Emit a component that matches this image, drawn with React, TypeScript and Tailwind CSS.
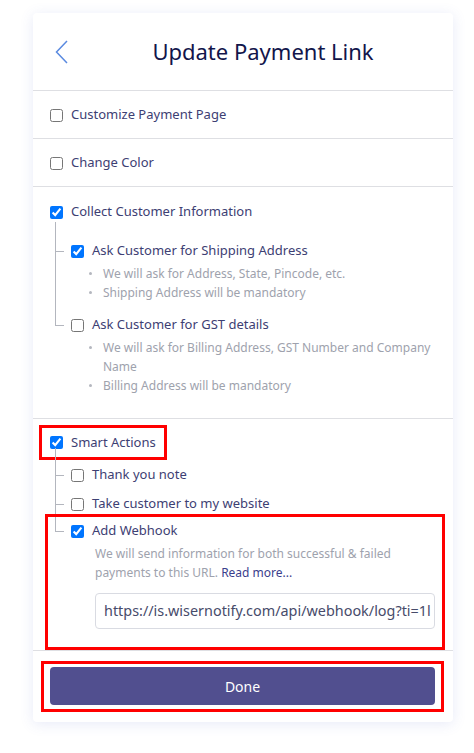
import React from 'react'

const FONT = { fontFamily: '"Noto Sans", "Open Sans", sans-serif' }

function Box({ checked }: { checked?: boolean }) {
  return (
    <input
      type="checkbox"
      defaultChecked={checked}
      className="m-0 h-[13px] w-[13px] shrink-0 accent-[#0075ff]"
    />
  )
}

function Bullets({ items }: { items: string[] }) {
  return (
    <ul className="mt-[3px] text-[12px] leading-[19px] text-[#9ea2ad]">
      {items.map((t, i) => (
        <li key={i} className="flex">
          <span className="ml-[18px] mt-[8px] h-[3px] w-[3px] shrink-0 rounded-full bg-[#b4b7bf]" />
          <span className="ml-[11px]">{t}</span>
        </li>
      ))}
    </ul>
  )
}

// branch height = top padding + half the 20px row
function SubItem({
  label,
  checked,
  last,
  pt,
  branch,
  children,
}: {
  label: string
  checked?: boolean
  last?: boolean
  pt: string
  branch: string
  children?: React.ReactNode
}) {
  return (
    <div className={`relative pl-[21px] ${pt}`}>
      {!last && <span className="absolute bottom-0 left-[5px] top-0 border-l border-[#b3b6be]" />}
      <span className={`absolute left-[5px] top-0 w-[9px] border-b border-l border-[#b3b6be] ${branch}`} />
      <label className="flex h-[20px] items-center gap-[8px] text-[13px] text-[#3d4073]">
        <Box checked={checked} />
        <span>{label}</span>
      </label>
      {children}
    </div>
  )
}

export default function App() {
  return (
    <div className="min-h-[753px] bg-white pt-[13px]" style={FONT}>
      <div className="ml-[33px] w-[420px] rounded-[4px] bg-white shadow-[0_2px_14px_rgba(70,90,200,0.13)]">
        {/* Header */}
        <div className="flex h-[78px] items-center border-b border-[#dedfe3] pl-[22px]">
          <svg width="13" height="24" viewBox="0 0 13 24" fill="none" className="shrink-0">
            <polyline points="12,1 1.5,12 12,23" stroke="#5a8ae0" strokeWidth="1.5" fill="none" />
          </svg>
          <div className="flex-1 pl-[5px] text-center text-[22px] text-[#12154b]">Update Payment Link</div>
        </div>

        {/* Customize */}
        <div className="flex h-[48px] items-center gap-[8px] border-b border-[#dedfe3] px-[17px] pt-[1px] text-[13px] text-[#3d4073]">
          <Box />
          <span>Customize Payment Page</span>
        </div>

        {/* Change Color */}
        <div className="flex h-[48px] items-center gap-[8px] border-b border-[#dedfe3] px-[17px] pt-[1px] text-[13px] text-[#3d4073]">
          <Box />
          <span>Change Color</span>
        </div>

        {/* Collect Customer Information */}
        <div className="border-b border-[#dedfe3] px-[17px] pb-[23px] pt-[15px]">
          <label className="flex h-[20px] items-center gap-[8px] text-[13px] text-[#3d4073]">
            <Box checked />
            <span>Collect Customer Information</span>
          </label>
          <SubItem label="Ask Customer for Shipping Address" checked pt="pt-[19px]" branch="h-[30px]">
            <Bullets items={['We will ask for Address, State, Pincode, etc.', 'Shipping Address will be mandatory']} />
          </SubItem>
          <SubItem label="Ask Customer for GST details" last pt="pt-[13px]" branch="h-[24px]">
            <Bullets
              items={[
                'We will ask for Billing Address, GST Number and Company Name',
                'Billing Address will be mandatory',
              ]}
            />
          </SubItem>
        </div>

        {/* Smart Actions */}
        <div className="border-b border-[#dedfe3] px-[17px] pt-[6px]">
          <div className="relative -ml-[11px] inline-flex h-[35px] items-center gap-[8px] border-[3px] border-[#ff0000] px-[8px] text-[13px] text-[#3d4073]">
            <Box checked />
            <span>Smart Actions</span>
            <span className="absolute -bottom-[3px] left-[13px] top-[20px] border-l border-[#b3b6be]" />
          </div>
          <SubItem label="Thank you note" pt="pt-[5px]" branch="h-[16px]" />
          <SubItem label="Take customer to my website" pt="pt-[9px]" branch="h-[20px]" />
          <div className="relative -ml-[5px] -mr-[9px] border-[3px] border-[#ff0000] pb-[18px] pl-[23px] pr-[7px] pt-[4px]">
            <span className="absolute left-[7px] top-0 h-[15px] w-[9px] border-b border-l border-[#b3b6be]" />
            <label className="flex h-[20px] items-center gap-[8px] text-[13px] text-[#3d4073]">
              <Box checked />
              <span>Add Webhook</span>
            </label>
            <p className="ml-[24px] mt-[3px] text-[12px] leading-[19px] text-[#9ea2ad]">
              We will send information for both successful &amp; failed payments to this URL.{' '}
              <span className="text-[#3b3e8c]">Read more...</span>
            </p>
            <div className="ml-[24px] mt-[11px] flex h-[36px] items-center overflow-hidden whitespace-nowrap rounded-[4px] border border-[#d9dbe2] px-[8px] text-[14.4px] text-[#474b6a]">
              https://is.wisernotify.com/api/webhook/log?ti=1l
            </div>
          </div>
        </div>

        {/* Done */}
        <div className="pb-[10px] pl-[8px] pr-[9px] pt-[10px]">
          <div className="border-[3px] border-[#ff0000] pb-[4px] pl-[6px] pr-[6px] pt-[3px]">
            <button className="flex h-[38px] w-full items-center justify-center rounded-[4px] bg-[#514f8f] text-[14px] text-white">
              Done
            </button>
          </div>
        </div>
      </div>
    </div>
  )
}
